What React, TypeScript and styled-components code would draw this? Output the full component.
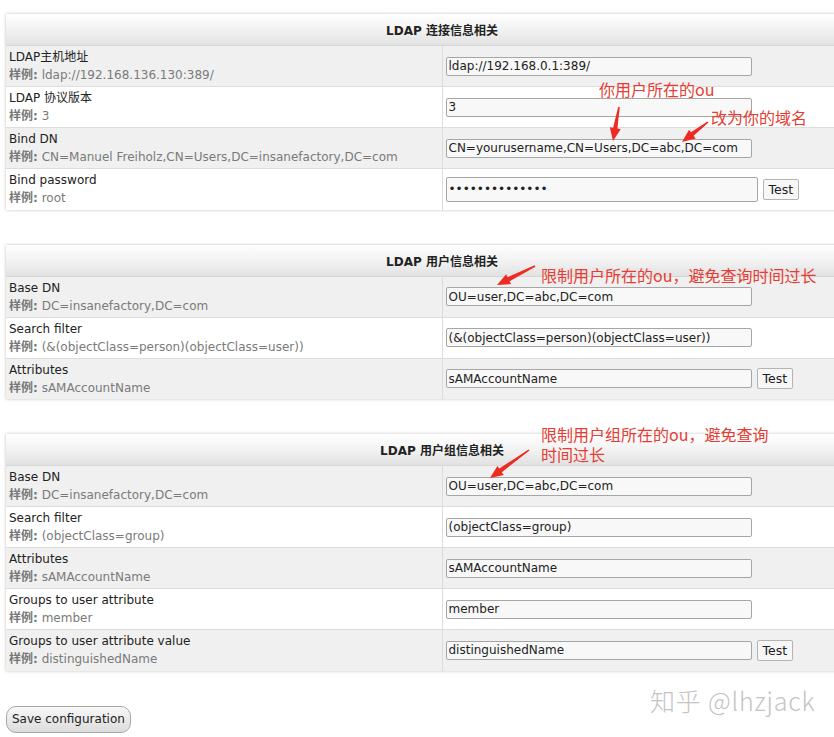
import React from 'react';
import styled, { createGlobalStyle } from 'styled-components';

const GlobalStyle = createGlobalStyle`
  html, body {
    margin: 0;
    padding: 0;
    overflow: hidden;
    background: #ffffff;
  }
  body {
    font-family: 'DejaVu Sans', 'Noto Sans CJK SC', sans-serif;
    font-size: 12px;
    color: #222222;
  }
`;

const Page = styled.div`
  position: relative;
  width: 834px;
  height: 737px;
  padding: 14px 0 0 6px;
  box-sizing: border-box;
`;

const Section = styled.table`
  width: 872px;
  border-collapse: collapse;
  margin-bottom: 35px;
  box-shadow: 0 0 3px rgba(0, 0, 0, 0.25);
  table-layout: fixed;
`;

const HeadCell = styled.th`
  height: 31px;
  padding: 0;
  font-size: 12px;
  font-weight: bold;
  color: #222;
  text-align: center;
  background: linear-gradient(to bottom, #ffffff 0%, #f1f1f1 55%, #e2e2e2 100%);
  border-bottom: 1px solid #d6d6d6;
`;

const Row = styled.tr<{ $odd: boolean }>`
  background: ${p => (p.$odd ? '#f0f0f0' : '#ffffff')};
  border-bottom: 1px solid #dddddd;
  &:last-child {
    border-bottom: none;
  }
`;

const LabelCell = styled.td`
  width: 436px;
  height: 41px;
  padding: 2px 3px 0 3px;
  box-sizing: border-box;
  vertical-align: top;
  border-right: 1px solid #dcdcdc;
  font-size: 12px;
  line-height: 18px;
`;

const Label = styled.div`
  color: #222;
`;

const Sample = styled.div`
  color: #7a7a7a;
  b {
    font-weight: bold;
    color: #777;
  }
`;

const ValueCell = styled.td`
  padding: 0 0 0 3px;
  vertical-align: middle;
`;

const Field = styled.div`
  display: flex;
  align-items: center;
  gap: 5px;
`;

const Input = styled.input<{ $wide?: boolean }>`
  width: ${p => (p.$wide ? '312px' : '306px')};
  height: ${p => (p.$wide ? '25px' : '19px')};
  box-sizing: border-box;
  margin: 0;
  padding: 0 2px;
  border: 1px solid #a6a6a6;
  border-radius: 2px;
  background: #f8f8f8;
  font-family: 'DejaVu Sans', sans-serif;
  font-size: 12px;
  color: #222;
`;

const TestButton = styled.button`
  height: 21px;
  margin: 0;
  padding: 0 5px;
  border: 1px solid #b4b4b4;
  border-radius: 2px;
  background: #f7f7f7;
  font-family: 'DejaVu Sans', sans-serif;
  font-size: 12.5px;
  color: #222;
`;

const SaveButton = styled.button`
  height: 27px;
  margin: 0;
  padding: 0 5px;
  border: 1px solid #a8a8a8;
  border-radius: 10px;
  background: linear-gradient(to bottom, #f8f8f8, #dcdcdc);
  font-family: 'DejaVu Sans', sans-serif;
  font-size: 12px;
  color: #222;
`;

const Note = styled.div<{ $x: number; $y: number }>`
  position: absolute;
  left: ${p => p.$x}px;
  top: ${p => p.$y}px;
  font-family: 'Noto Sans CJK SC', sans-serif;
  font-size: 16px;
  line-height: 20px;
  color: #e63c33;
  white-space: nowrap;
`;

const Watermark = styled.div`
  position: absolute;
  left: 650px;
  top: 682px;
  font-family: 'Noto Sans CJK SC', 'DejaVu Sans', sans-serif;
  font-size: 25px;
  font-weight: 300;
  color: #c4c4c4;
  white-space: nowrap;
  letter-spacing: 0.8px;
`;

const Overlay = styled.svg`
  position: absolute;
  left: 0;
  top: 0;
  pointer-events: none;
`;

type Item = {
  label: string;
  sample: string;
  value: string;
  password?: boolean;
  test?: boolean;
};

const sections: { title: string; items: Item[] }[] = [
  {
    title: 'LDAP 连接信息相关',
    items: [
      { label: 'LDAP主机地址', sample: 'ldap://192.168.136.130:389/', value: 'ldap://192.168.0.1:389/' },
      { label: 'LDAP 协议版本', sample: '3', value: '3' },
      {
        label: 'Bind DN',
        sample: 'CN=Manuel Freiholz,CN=Users,DC=insanefactory,DC=com',
        value: 'CN=yourusername,CN=Users,DC=abc,DC=com',
      },
      { label: 'Bind password', sample: 'root', value: 'secretpassword', password: true, test: true },
    ],
  },
  {
    title: 'LDAP 用户信息相关',
    items: [
      { label: 'Base DN', sample: 'DC=insanefactory,DC=com', value: 'OU=user,DC=abc,DC=com' },
      {
        label: 'Search filter',
        sample: '(&(objectClass=person)(objectClass=user))',
        value: '(&(objectClass=person)(objectClass=user))',
      },
      { label: 'Attributes', sample: 'sAMAccountName', value: 'sAMAccountName', test: true },
    ],
  },
  {
    title: 'LDAP 用户组信息相关',
    items: [
      { label: 'Base DN', sample: 'DC=insanefactory,DC=com', value: 'OU=user,DC=abc,DC=com' },
      { label: 'Search filter', sample: '(objectClass=group)', value: '(objectClass=group)' },
      { label: 'Attributes', sample: 'sAMAccountName', value: 'sAMAccountName' },
      { label: 'Groups to user attribute', sample: 'member', value: 'member' },
      {
        label: 'Groups to user attribute value',
        sample: 'distinguishedName',
        value: 'distinguishedName',
        test: true,
      },
    ],
  },
];

// red hand-drawn style arrows: tail (x1,y1) -> tip (x2,y2)
const arrows = [
  [619, 107, 613, 141],
  [708, 122, 682, 142],
  [535, 266, 497, 285],
  [529, 450, 490, 478],
];

const arrowPoints = (x1: number, y1: number, x2: number, y2: number) => {
  const dx = x2 - x1;
  const dy = y2 - y1;
  const len = Math.hypot(dx, dy);
  const ux = dx / len;
  const uy = dy / len;
  const nx = -uy;
  const ny = ux;
  const head = 13;
  const bx = x2 - ux * head;
  const by = y2 - uy * head;
  const pts = [
    [x1 + nx * 0.8, y1 + ny * 0.8],
    [bx + nx * 2.2, by + ny * 2.2],
    [bx + nx * 5.5, by + ny * 5.5],
    [x2, y2],
    [bx - nx * 5.5, by - ny * 5.5],
    [bx - nx * 2.2, by - ny * 2.2],
    [x1 - nx * 0.8, y1 - ny * 0.8],
  ];
  return pts.map(p => p.map(v => v.toFixed(1)).join(',')).join(' ');
};

const FieldRow = ({ item, odd }: { item: Item; odd: boolean }) => (
  <Row $odd={odd}>
    <LabelCell>
      <Label>{item.label}</Label>
      <Sample>
        <b>样例:</b> {item.sample}
      </Sample>
    </LabelCell>
    <ValueCell>
      <Field>
        <Input
          type={item.password ? 'password' : 'text'}
          defaultValue={item.value}
          $wide={item.password}
          readOnly
        />
        {item.test && <TestButton>Test</TestButton>}
      </Field>
    </ValueCell>
  </Row>
);

export default function App() {
  return (
    <>
      <GlobalStyle />
      <Page>
        {sections.map(s => (
          <Section key={s.title}>
            <thead>
              <tr>
                <HeadCell colSpan={2}>{s.title}</HeadCell>
              </tr>
            </thead>
            <tbody>
              {s.items.map((item, i) => (
                <FieldRow key={item.label + i} item={item} odd={i % 2 === 0} />
              ))}
            </tbody>
          </Section>
        ))}
        <SaveButton>Save configuration</SaveButton>

        <Note $x={599} $y={79}>你用户所在的ou</Note>
        <Note $x={711} $y={107}>改为你的域名</Note>
        <Note $x={541} $y={265}>限制用户所在的ou，避免查询时间过长</Note>
        <Note $x={541} $y={424}>
          限制用户组所在的ou，避免查询
          <br />
          时间过长
        </Note>
        <Overlay width={834} height={737}>
          {arrows.map(([x1, y1, x2, y2], i) => (
            <polygon key={i} points={arrowPoints(x1, y1, x2, y2)} fill="#ee2b23" />
          ))}
        </Overlay>
        <Watermark>知乎 @lhzjack</Watermark>
      </Page>
    </>
  );
}
